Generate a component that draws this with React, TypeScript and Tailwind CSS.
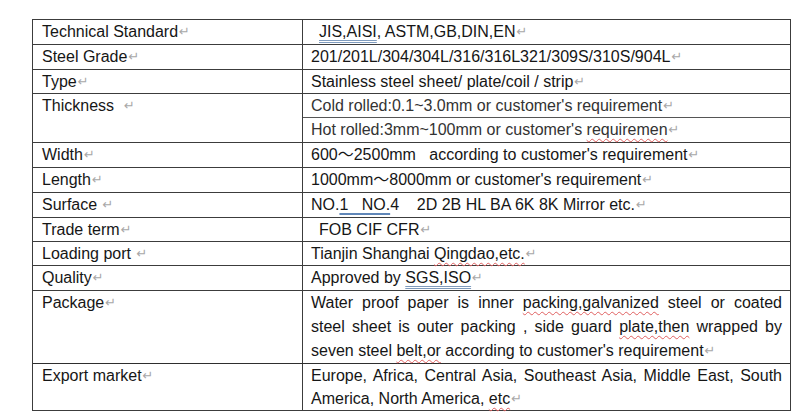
import React from "react";

const Mark = () => (
  <span className="text-[13px] leading-none text-[#a8a8a8] ml-[1px] align-[1px]" style={{ fontFamily: '"DejaVu Sans", sans-serif' }}>
    ↵
  </span>
);

const Wavy = ({ children }: { children: React.ReactNode }) => (
  <span className="underline decoration-wavy decoration-[#e06060] decoration-1 underline-offset-[3px]">{children}</span>
);

const Blue = ({ children, dbl }: { children: React.ReactNode; dbl?: boolean }) => (
  <span
    className={
      dbl
        ? "underline decoration-double decoration-[#7f9bbd] decoration-1 underline-offset-[3px]"
        : "underline decoration-[#5f86b8] decoration-[1.5px] underline-offset-[3px]"
    }
  >
    {children}
  </span>
);

type RowProps = { label: React.ReactNode; h: string; children: React.ReactNode; first?: boolean };

const Row = ({ label, h, children, first }: RowProps) => (
  <div className={`flex ${first ? "" : "border-t border-[#3c3c3c]"}`}>
    <div className={`w-[270px] shrink-0 border-r border-[#3c3c3c] pl-[9px] leading-[24px] ${h}`}>{label}</div>
    <div className={`flex-1 pl-[8px] pr-[8px] leading-[24px] ${h}`}>{children}</div>
  </div>
);

export default function App() {
  return (
    <div
      className="w-[800px] h-[420px] bg-white pt-[19px] pl-[32px] text-[16px] text-[#161616]"
      style={{ fontFamily: '"Liberation Sans", Arial, "Noto Sans CJK SC", sans-serif' }}
    >
      <div className="w-[759px] border border-[#3c3c3c]">
        <Row first h="h-[24px]" label={<>Technical Standard<Mark /></>}>
          <span className="whitespace-pre pl-[8px]">
            <Blue dbl>JIS,AISI</Blue>, ASTM,GB,DIN,EN<Mark />
          </span>
        </Row>
        <Row h="h-[24px]" label={<>Steel Grade<Mark /></>}>
          201/201L/304/304L/316/316L321/309S/310S/904L<Mark />
        </Row>
        <Row h="h-[23px]" label={<>Type<Mark /></>}>
          Stainless steel sheet/ plate/coil / strip<Mark />
        </Row>
        <div className="flex border-t border-[#3c3c3c]">
          <div className="w-[270px] shrink-0 border-r border-[#3c3c3c] pl-[9px] leading-[23px] h-[48px]">
            <span className="whitespace-pre">Thickness  </span>
            <Mark />
          </div>
          <div className="flex-1 flex flex-col text-[#333]">
            <div className="h-[23px] leading-[23px] pl-[8px]">
              Cold rolled:0.1~3.0mm or customer's requirement<Mark />
            </div>
            <div className="h-[25px] leading-[24px] pl-[8px] border-t border-[#555]">
              Hot rolled:3mm~100mm or customer's <Wavy>requiremen</Wavy>
              <Mark />
            </div>
          </div>
        </div>
        <Row h="h-[24px]" label={<>Width<Mark /></>}>
          <span className="whitespace-pre">600～2500mm   according to customer's requirement</span>
          <Mark />
        </Row>
        <Row h="h-[24px]" label={<>Length<Mark /></>}>
          1000mm～8000mm or customer's requirement<Mark />
        </Row>
        <Row h="h-[24px]" label={<><span className="whitespace-pre">Surface </span><Mark /></>}>
          <span className="whitespace-pre">
            NO.<Blue>1   NO.</Blue>4    2D 2B HL BA 6K 8K Mirror etc.
          </span>
          <Mark />
        </Row>
        <Row h="h-[23px]" label={<>Trade term<Mark /></>}>
          <span className="pl-[8px]">FOB CIF CFR</span>
          <Mark />
        </Row>
        <Row h="h-[23px]" label={<><span className="whitespace-pre">Loading port </span><Mark /></>}>
          Tianjin Shanghai <Wavy>Qingdao,etc.</Wavy>
          <Mark />
        </Row>
        <Row h="h-[24px]" label={<>Quality<Mark /></>}>
          Approved by <Blue dbl>SGS,ISO</Blue>
          <Mark />
        </Row>
        <Row h="h-[72px]" label={<>Package<Mark /></>}>
          <div className="text-justify [text-align-last:justify]">
            Water proof paper is inner <Wavy>packing,galvanized</Wavy> steel or coated
          </div>
          <div className="text-justify [text-align-last:justify]">
            steel sheet is outer packing , side guard <Wavy>plate,then</Wavy> wrapped by
          </div>
          <div>
            seven steel <Wavy>belt,or</Wavy> according to customer's requirement<Mark />
          </div>
        </Row>
        <div className="flex border-t border-[#2e2e2e]">
          <div className="w-[270px] shrink-0 border-r border-[#3c3c3c] pl-[9px] leading-[23px] h-[46px]">
            Export market<Mark />
          </div>
          <div className="flex-1 pl-[8px] pr-[8px] leading-[23px] h-[46px]">
            <div className="text-justify [text-align-last:justify]">
              Europe, Africa, Central Asia, Southeast Asia, Middle East, South
            </div>
            <div>
              America, North America, <Wavy>etc</Wavy>
              <Mark />
            </div>
          </div>
        </div>
      </div>
    </div>
  );
}
